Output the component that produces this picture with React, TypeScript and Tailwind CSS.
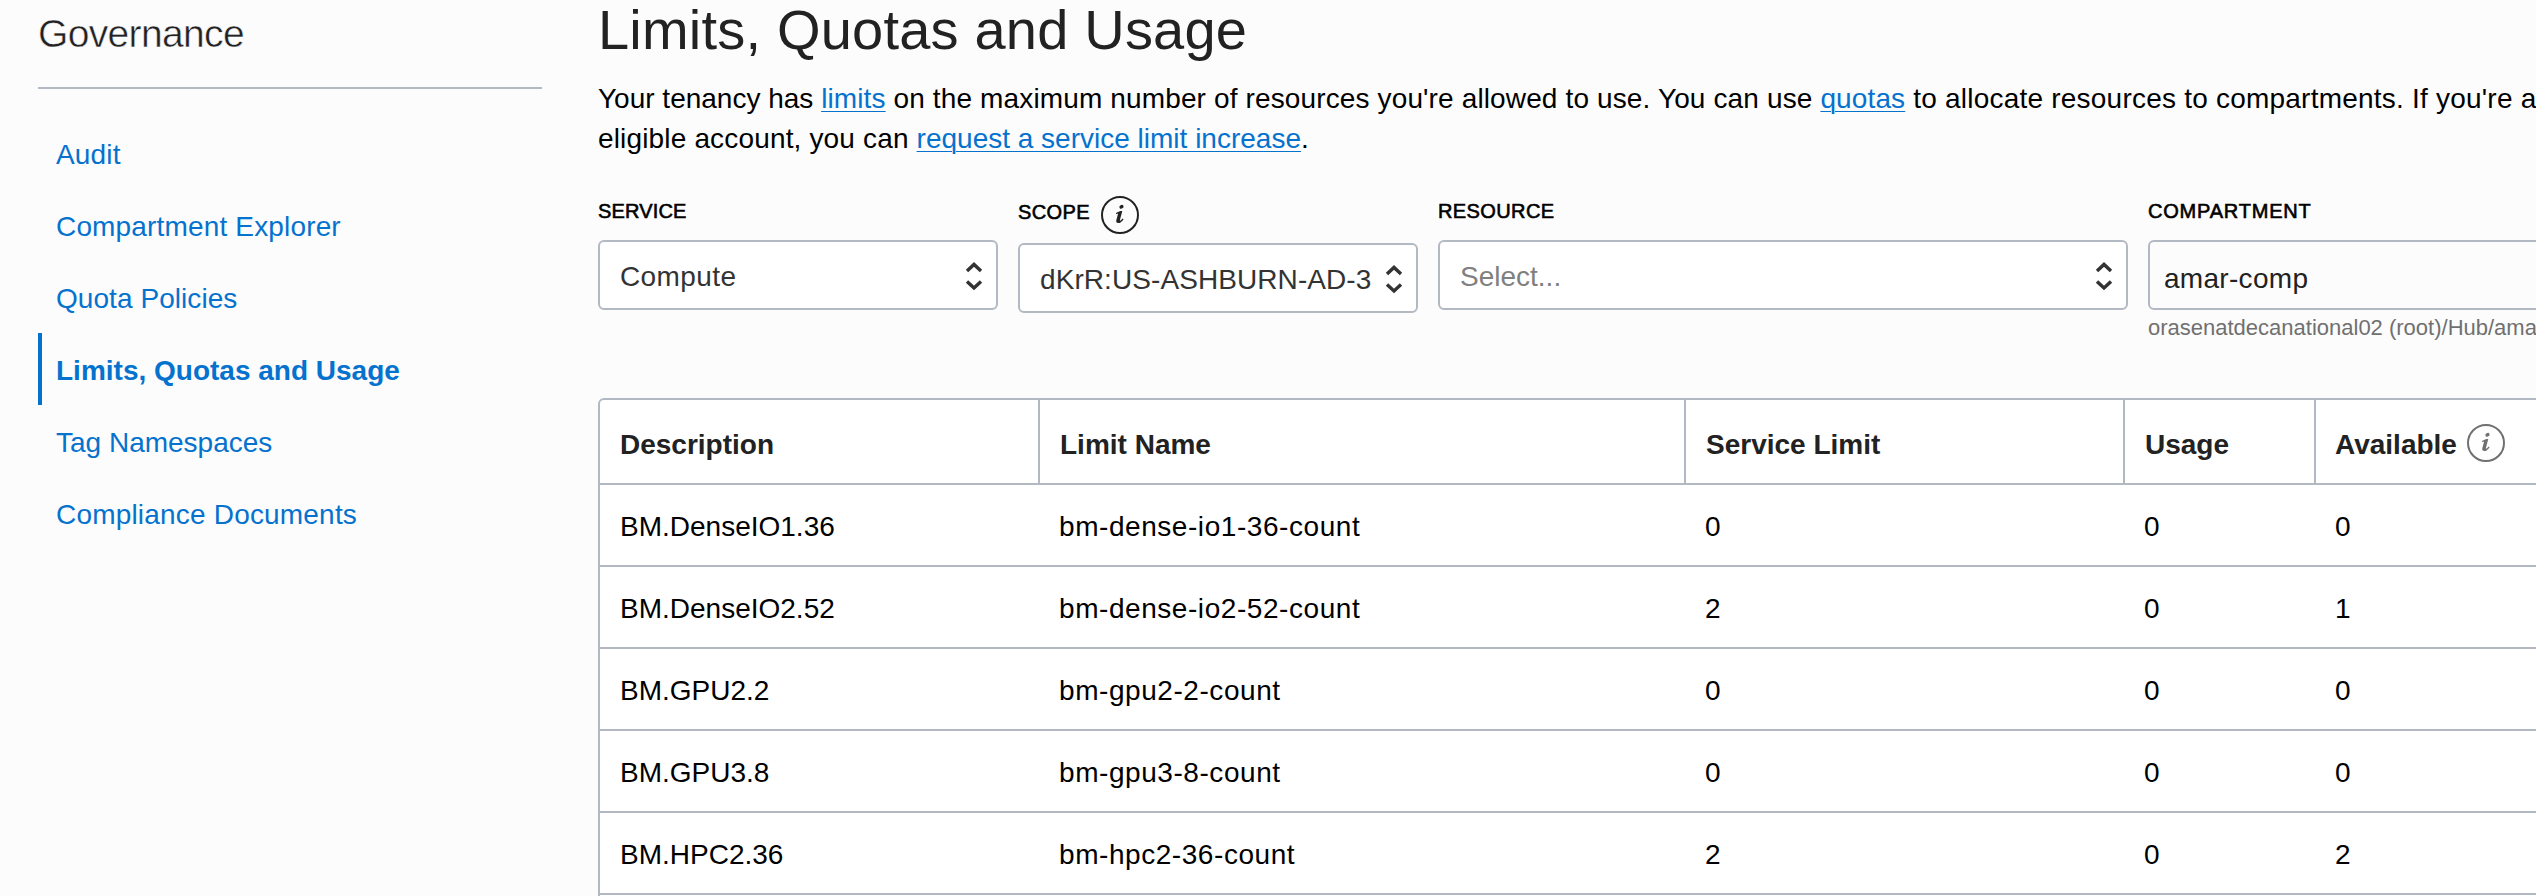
import React from "react";

const NAV = [
  { label: "Audit", spacing: "tracking-[0.15px]" },
  { label: "Compartment Explorer", spacing: "tracking-[0.16px]" },
  { label: "Quota Policies", spacing: "tracking-[0.06px]" },
  { label: "Limits, Quotas and Usage", spacing: "tracking-normal", active: true },
  { label: "Tag Namespaces", spacing: "tracking-normal" },
  { label: "Compliance Documents", spacing: "tracking-[0.19px]" },
];

const ROWS = [
  ["BM.DenseIO1.36", "bm-dense-io1-36-count", "0", "0", "0"],
  ["BM.DenseIO2.52", "bm-dense-io2-52-count", "2", "0", "1"],
  ["BM.GPU2.2", "bm-gpu2-2-count", "0", "0", "0"],
  ["BM.GPU3.8", "bm-gpu3-8-count", "0", "0", "0"],
  ["BM.HPC2.36", "bm-hpc2-36-count", "2", "0", "2"],
];

const GRID = "grid grid-cols-[440px_646px_439px_191px_1fr]";

const LINK = "text-[#0572ce] underline decoration-1 underline-offset-[3px]";

function InfoIcon({ className }: { className: string }) {
  return (
    <svg viewBox="0 0 38 38" fill="none" className={className}>
      <circle cx="19" cy="19" r="18" stroke="currentColor" strokeWidth="2" />
      <ellipse cx="20.5" cy="10.8" rx="2.2" ry="1.8" transform="rotate(-30 20.5 10.8)" fill="currentColor" />
      <path
        d="M15 17C17 15.5 19 14.9 21.3 14.9L18.9 24C18.7 25 19.2 25 20 24.3L21.7 22.6L22.6 23.4C20.6 25.8 19 27 17.4 27C15.6 27 14.9 25.8 15.3 24.3L16.9 18.2C17.1 17.3 16.6 17.3 15.3 18.2Z"
        fill="currentColor"
      />
    </svg>
  );
}

function Arrows() {
  return (
    <svg viewBox="0 0 20 32" fill="none" className="h-8 w-5 shrink-0 text-[#333]">
      <path d="M3 12L10 5.4L17 12M3 22.4L10 29L17 22.4" stroke="currentColor" strokeWidth="3.4" />
    </svg>
  );
}

function Label({ children, className = "" }: { children: React.ReactNode; className?: string }) {
  return <span className={`text-[20px] leading-6 text-black [-webkit-text-stroke:0.6px_black] ${className}`}>{children}</span>;
}

function Select({ children, muted, className = "" }: { children: React.ReactNode; muted?: boolean; className?: string }) {
  return (
    <div className="flex h-[70px] items-center justify-between rounded-md border-2 border-[#b3b9c3] bg-white pr-3 pl-5">
      <span className={`pt-1 text-[28px] ${muted ? "text-[#808080]" : "text-[#333]"} ${className}`}>{children}</span>
      <Arrows />
    </div>
  );
}

export default function App() {
  return (
    <div className="flex h-[896px] w-[2536px] overflow-hidden bg-[#fcfcfc] font-['Liberation_Sans',Arial,sans-serif]">
      <aside className="ml-[38px] w-[504px] shrink-0">
        <div className="h-[89px] border-b-2 border-[#b3b9c3] pt-[11px]">
          <h2 className="text-[39px] leading-[46px] tracking-[-0.65px] text-[#222] [-webkit-text-stroke:0.5px_#fcfcfc]">Governance</h2>
        </div>
        <nav className="mt-7 flex flex-col">
          {NAV.map((n) => (
            <a
              key={n.label}
              className={
                n.active
                  ? "flex h-[72px] items-center border-l-4 border-[#0572ce] pt-1 pl-[14px] text-[28px] font-bold text-[#0572ce]"
                  : "flex h-[72px] items-center pt-1 pl-[18px] text-[28px] text-[#0572ce]"
              }
            >
              <span className={n.spacing}>{n.label}</span>
            </a>
          ))}
        </nav>
      </aside>

      <main className="ml-14 w-[2100px] shrink-0">
        <h1 className="h-[79px] text-[56px] leading-[60px] tracking-[0.2px] whitespace-nowrap text-[#222]">Limits, Quotas and Usage</h1>
        <p className="text-[28px] leading-10 whitespace-nowrap text-black">
          Your tenancy has <a className={`${LINK} tracking-[0.12px]`}>limits</a>
          <span className="tracking-[0.135px]"> on the maximum number of resources you're allowed to use. You can use </span>
          <a className={`${LINK} tracking-[0.12px]`}>quotas</a>
          <span className="tracking-[0.22px]"> to allocate resources to compartments. If you're an</span>
          <br />
          <span className="tracking-[0.16px]">eligible account, you can </span>
          <a className={LINK}>request a service limit increase</a>.
        </p>

        <div className="mt-[40px] flex h-[199px] items-start gap-5">
          <div className="w-[400px]">
            <div className="h-[41px]"><Label className="tracking-[0.15px]">SERVICE</Label></div>
            <Select className="tracking-[0.4px]">Compute</Select>
          </div>
          <div className="w-[400px]">
            <div className="flex h-11"><Label className="w-[83px] pt-px tracking-[0.4px]">SCOPE</Label><InfoIcon className="-mt-[3px] size-[38px] text-[#222]" /></div>
            <Select className="tracking-[0.08px]">dKrR:US-ASHBURN-AD-3</Select>
          </div>
          <div className="w-[690px]">
            <div className="h-[41px]"><Label className="tracking-[0.4px]">RESOURCE</Label></div>
            <Select muted>Select...</Select>
          </div>
          <div className="w-[500px]">
            <div className="h-[41px]"><Label className="tracking-[0.8px]">COMPARTMENT</Label></div>
            <div className="flex h-[70px] items-center rounded-md border-2 border-[#b3b9c3] px-[14px] pt-2">
              <span className="text-[28px] tracking-[0.3px] text-[#222]">amar-comp</span>
            </div>
            <span className="block pt-0.5 text-[22px] leading-8 text-[#707070]">orasenatdecanational02 (root)/Hub/amar-comp</span>
          </div>
        </div>

        <div className="rounded-tl-md border-2 border-[#b3b9c3] bg-white">
          <div className={`${GRID} h-[85px] border-b-2 border-[#b3b9c3] text-[28px] font-bold text-[#222]`}>
            {["Description", "Limit Name", "Service Limit", "Usage", "Available"].map((h, i) => (
              <div key={h} className={i < 4 ? "flex items-center border-r-2 border-[#b3b9c3] pt-1.5 pl-5" : "flex items-center gap-2.5 pt-1.5 pl-[19px]"}>
                <span>{h}</span>
                {i === 4 && <InfoIcon className="-mt-[3px] size-[38px] text-[#707070]" />}
              </div>
            ))}
          </div>
          {ROWS.map((r) => (
            <div key={r[0]} className={`${GRID} h-[82px] border-b-2 border-[#b3b9c3] text-[28px] text-black`}>
              {r.map((c, i) => (
                <div key={i} className={i === 0 ? "flex items-center pt-1 pl-5" : "flex items-center pt-1 pl-[19px]"}>
                  <span className={i === 1 ? "tracking-[0.56px]" : ""}>{c}</span>
                </div>
              ))}
            </div>
          ))}
          <div className="h-20" />
        </div>
      </main>
    </div>
  );
}
